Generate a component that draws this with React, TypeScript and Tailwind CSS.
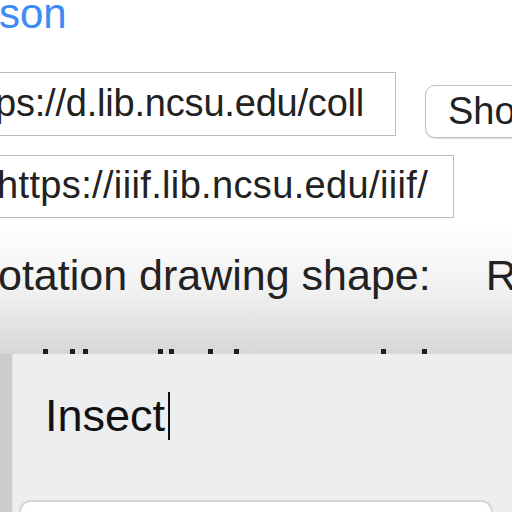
import React from "react";

const dots = [43, 70, 83, 158, 169, 208, 234, 381, 422];

export default function App() {
  return (
    <div className="relative w-[512px] h-[512px] overflow-hidden bg-[linear-gradient(to_bottom,#ffffff_0px,#ffffff_222px,#f1f1f1_290px,#d7d7d7_354px)] font-['Liberation_Sans',Arial,sans-serif] text-[#222]">
      <div className="h-[27px] leading-[27px] text-[42px] text-[#3d8bf5] ml-[-1px] whitespace-nowrap">son</div>

      <div className="mt-[45px] flex items-start">
        <div className="shrink-0 ml-[-20px] w-[416px] h-[64px] border border-[#bcbcbc] bg-white pl-[14px] pt-[8px] text-[38px] leading-[44px] whitespace-nowrap overflow-hidden tracking-[-0.2px]">
          ps://d.lib.ncsu.edu/coll
        </div>
        <div className="ml-[29px] mt-[13px] h-[53px] w-[120px] shrink-0 rounded-[10px] border border-[#c3c3c3] bg-white shadow-[0_1px_1px_rgba(0,0,0,0.15)] pl-[22px] pt-[3px] text-[38px] leading-[44px] whitespace-nowrap overflow-hidden">
          Show
        </div>
      </div>

      <div className="mt-[17px] ml-[-20px] w-[474px] h-[63px] border border-[#bcbcbc] bg-white pl-[16px] pt-[7px] text-[38px] leading-[44px] whitespace-nowrap overflow-hidden tracking-[0.35px]">
        https://iiif.lib.ncsu.edu/iiif/
      </div>

      <div className="mt-[32px] flex whitespace-nowrap text-[43px] leading-[50px]">
        <span className="ml-[-2px]">otation drawing shape:</span>
        <span className="ml-[55px]">R</span>
      </div>

      {dots.map((x) => (
        <div key={x} className="absolute top-[349px] w-[5px] h-[5px] bg-[#1e1e1e]" style={{ left: x }} />
      ))}
      <svg className="absolute left-0 top-[354px]" width="14" height="20" viewBox="0 0 14 20">
        <polygon points="4,1 10,1 12,18 11,18" fill="#1e1e1e" />
      </svg>

      <div className="absolute left-0 top-[354px] w-[512px] h-[158px] bg-[linear-gradient(to_right,#cccccc,#d8d8d8)]">
        <div className="absolute left-[12px] top-0 right-0 bottom-0 bg-[#eceeef] border-l border-[#e4e6e7]">
          <div className="flex items-start pl-[32px] pt-[37px]">
            <span className="text-[45px] leading-[50px] text-[#111]">Insect</span>
            <span className="ml-[3px] mt-[1px] w-[2px] h-[48px] bg-[#111]" />
          </div>
          <div className="absolute left-[6px] top-[146px] w-[474px] h-[30px] rounded-t-[12px] bg-white border-t-2 border-x-2 border-[#d3d6d8]" />
        </div>
      </div>
    </div>
  );
}
